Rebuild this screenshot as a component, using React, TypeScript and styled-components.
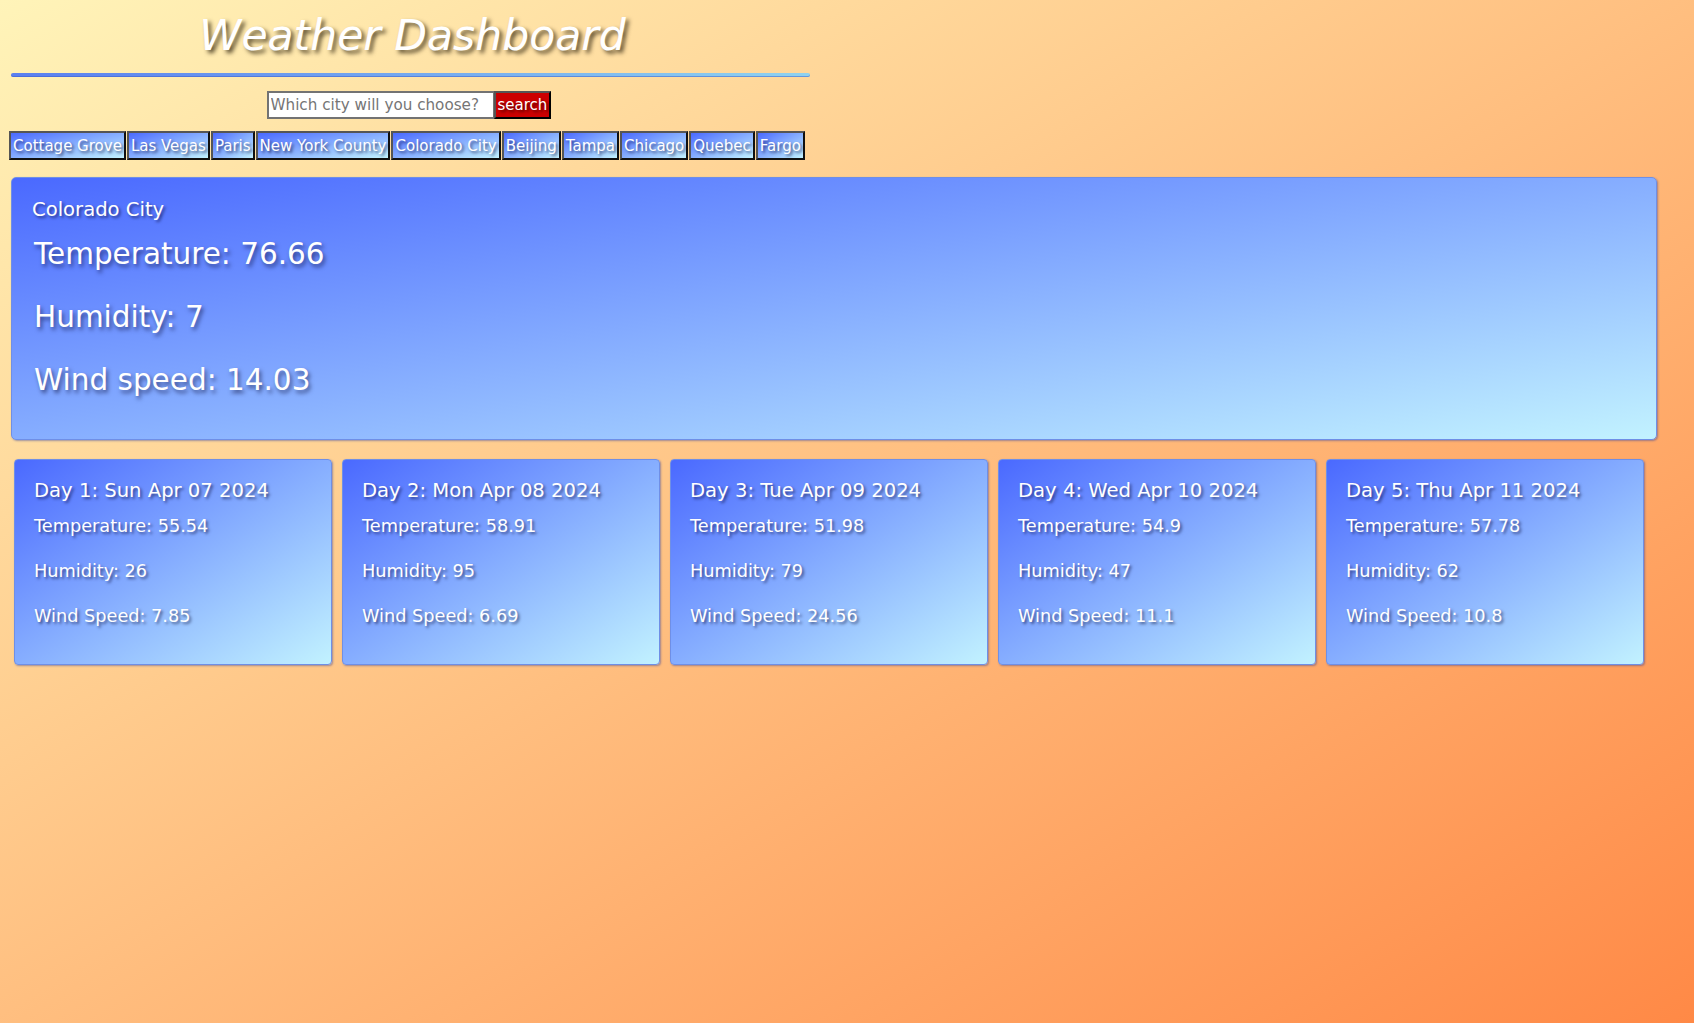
import React from 'react';
import styled, { createGlobalStyle } from 'styled-components';

const GlobalStyle = createGlobalStyle`
  html {
    min-height: 100%;
    background: linear-gradient(to bottom right, #fff4b9, #ff8946);
  }
  body {
    margin: 0;
    min-height: 100vh;
    font-family: "DejaVu Sans", "Liberation Sans", sans-serif;
    color: #fff;
  }
`;

const Page = styled.div`
  display: flex;
  flex-direction: column;
  align-items: flex-start;
  padding-top: 11px;
`;

const Header = styled.header`
  width: 799px;
  margin-left: 11px;
  display: flex;
  flex-direction: column;
  align-items: center;
`;

const Title = styled.h1`
  margin: 0 0 0 4px;
  font-size: 42.5px;
  font-style: italic;
  font-weight: normal;
  line-height: 49px;
  color: #fff;
  text-shadow: 3px 3px 4px rgba(40, 30, 10, 0.75);
`;

const Divider = styled.div`
  align-self: stretch;
  height: 4px;
  margin-top: 13px;
  border-radius: 2px;
  background: linear-gradient(to right, #5a7ff0, #8fd2ef);
  box-shadow: inset 0 -1px 0 rgba(60, 90, 200, 0.5);
`;

const SearchForm = styled.form`
  display: flex;
  height: 28px;
  margin: 14px 4px 0 0;
`;

const SearchInput = styled.input`
  box-sizing: border-box;
  width: 227px;
  height: 28px;
  padding: 0 2px;
  border: 2px solid #737373;
  border-right-width: 1px;
  background: #fff;
  font-family: inherit;
  font-size: 15.2px;
  color: #333;
  outline: none;

  &::placeholder {
    color: #757575;
  }
`;

const SearchButton = styled.button`
  box-sizing: border-box;
  width: 57px;
  height: 28px;
  padding: 0 2px;
  border: 2px solid;
  border-color: #555 #000 #000 #555;
  background: #cc0000;
  color: #fff;
  font-family: inherit;
  font-size: 15px;
  text-shadow: 2px 2px 3px rgba(0, 0, 0, 0.6);
  cursor: pointer;
`;

const CityList = styled.nav`
  display: flex;
  gap: 1px;
  margin: 12px 0 0 9px;
`;

const CityButton = styled.button`
  box-sizing: border-box;
  height: 29px;
  padding: 0 2px;
  border: 2px solid;
  border-color: #555 #111 #111 #555;
  background: linear-gradient(to bottom right, #4a69ff, #c2f2ff);
  color: #fff;
  font-family: inherit;
  font-size: 15px;
  white-space: nowrap;
  text-shadow: 2px 2px 3px rgba(0, 0, 40, 0.6);
  cursor: pointer;
`;

const CurrentCard = styled.section`
  box-sizing: border-box;
  width: 1646px;
  height: 263px;
  margin: 17px 0 0 11px;
  padding: 20px 20px;
  border: 1px solid #6f8fe6;
  border-radius: 5px;
  background: linear-gradient(to bottom right, #4a69ff, #c2f2ff);
  box-shadow: 1px 1px 2px rgba(40, 60, 160, 0.45);
`;

const CityName = styled.h3`
  margin: 0 0 16px;
  font-size: 19.6px;
  font-weight: normal;
  line-height: 23px;
  text-shadow: 2px 2px 3px rgba(0, 0, 40, 0.55);
`;

const CurrentStat = styled.p`
  margin: 0 0 29px;
  padding-left: 2px;
  font-size: 29.5px;
  line-height: 34px;
  text-shadow: 2px 3px 4px rgba(0, 0, 40, 0.55);
`;

const ForecastRow = styled.div`
  display: flex;
  gap: 10px;
  margin: 19px 0 0 14px;
`;

const ForecastCard = styled.article`
  box-sizing: border-box;
  width: 318px;
  height: 206px;
  padding: 19px 19px;
  border: 1px solid #6f8fe6;
  border-radius: 4px;
  background: linear-gradient(to bottom right, #4a69ff, #c2f2ff);
  box-shadow: 1px 1px 2px rgba(40, 60, 160, 0.45);
`;

const DayTitle = styled.h4`
  margin: 0 0 14px;
  font-size: 19.6px;
  font-weight: normal;
  line-height: 23px;
  white-space: nowrap;
  text-shadow: 2px 2px 3px rgba(0, 0, 40, 0.55);
`;

const DayStat = styled.p`
  margin: 0 0 25px;
  font-size: 17.7px;
  line-height: 20px;
  white-space: nowrap;
  text-shadow: 2px 2px 3px rgba(0, 0, 40, 0.55);
`;

const cities = [
  'Cottage Grove',
  'Las Vegas',
  'Paris',
  'New York County',
  'Colorado City',
  'Beijing',
  'Tampa',
  'Chicago',
  'Quebec',
  'Fargo',
];

const forecast = [
  { date: 'Sun Apr 07 2024', temp: 55.54, humidity: 26, wind: 7.85 },
  { date: 'Mon Apr 08 2024', temp: 58.91, humidity: 95, wind: 6.69 },
  { date: 'Tue Apr 09 2024', temp: 51.98, humidity: 79, wind: 24.56 },
  { date: 'Wed Apr 10 2024', temp: 54.9, humidity: 47, wind: 11.1 },
  { date: 'Thu Apr 11 2024', temp: 57.78, humidity: 62, wind: 10.8 },
];

const App: React.FC = () => {
  return (
    <>
      <GlobalStyle />
      <Page>
        <Header>
          <Title>Weather Dashboard</Title>
          <Divider />
          <SearchForm onSubmit={(e) => e.preventDefault()}>
            <SearchInput type="text" placeholder="Which city will you choose?" />
            <SearchButton type="submit">search</SearchButton>
          </SearchForm>
        </Header>

        <CityList>
          {cities.map((city) => (
            <CityButton key={city}>{city}</CityButton>
          ))}
        </CityList>

        <CurrentCard>
          <CityName>Colorado City</CityName>
          <CurrentStat>Temperature: 76.66</CurrentStat>
          <CurrentStat>Humidity: 7</CurrentStat>
          <CurrentStat>Wind speed: 14.03</CurrentStat>
        </CurrentCard>

        <ForecastRow>
          {forecast.map((day, i) => (
            <ForecastCard key={day.date}>
              <DayTitle>
                Day {i + 1}: {day.date}
              </DayTitle>
              <DayStat>Temperature: {day.temp}</DayStat>
              <DayStat>Humidity: {day.humidity}</DayStat>
              <DayStat>Wind Speed: {day.wind}</DayStat>
            </ForecastCard>
          ))}
        </ForecastRow>
      </Page>
    </>
  );
};

export default App;
